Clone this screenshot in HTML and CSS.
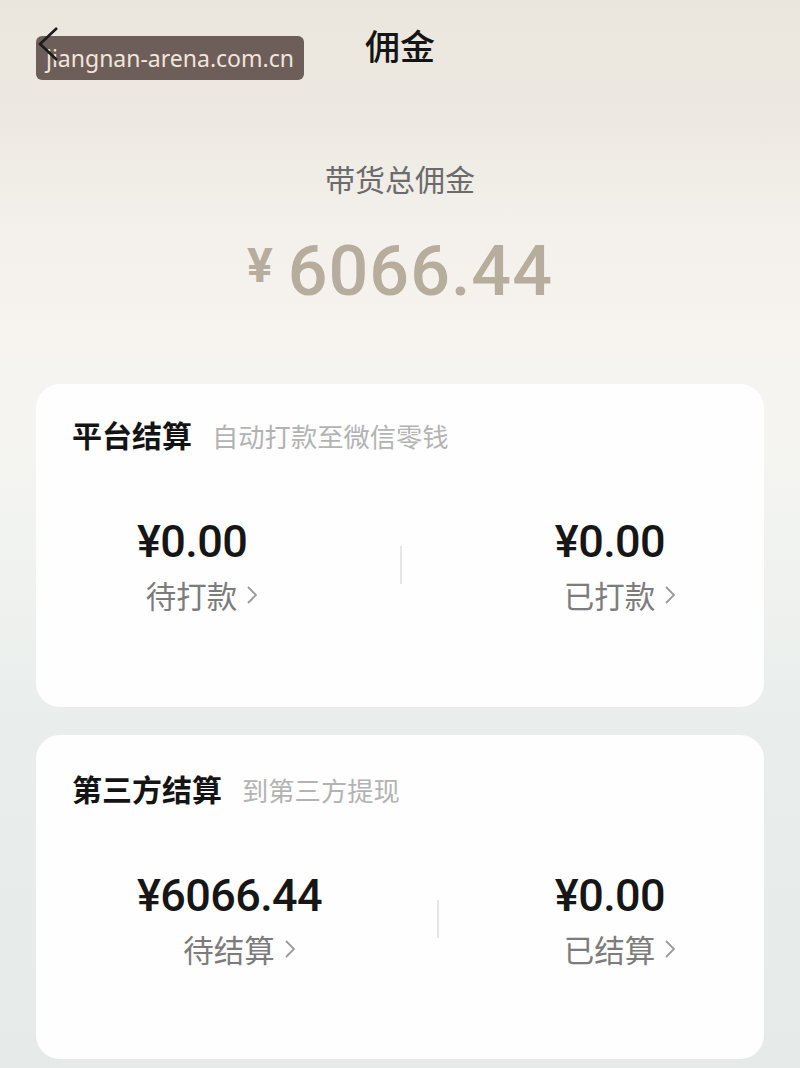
FILE: index.html
```html
<!DOCTYPE html>
<html lang="zh-CN">
<head>
    <meta charset="UTF-8">
    <meta name="viewport" content="width=device-width, initial-scale=1.0">
    <title>佣金</title>
    <link rel="stylesheet" href="styles.css">
</head>
<body>
    <div class="page">
        <div class="header">
            <div class="watermark">jiangnan-arena.com.cn</div>
            <svg class="back" width="24" height="40" viewBox="0 0 24 40">
                <polyline points="20,2 3,18 20,34" fill="none" stroke="#1b1b1b" stroke-width="2.6"/>
            </svg>
            <h1>佣金</h1>
        </div>

        <div class="summary">
            <p class="summary-label">带货总佣金</p>
            <p class="summary-amount"><span class="yen">¥</span>6066.44</p>
        </div>

        <div class="card">
            <div class="card-title">平台结算<span class="card-sub">自动打款至微信零钱</span></div>
            <div class="stats">
                <div class="stat">
                    <div class="stat-value">¥0.00</div>
                    <div class="stat-label">待打款<svg class="arrow" width="12" height="22" viewBox="0 0 12 22"><polyline points="2,3 10,11 2,19" fill="none" stroke="#9a9a9a" stroke-width="1.8"/></svg></div>
                </div>
                <div class="divider"></div>
                <div class="stat">
                    <div class="stat-value">¥0.00</div>
                    <div class="stat-label">已打款<svg class="arrow" width="12" height="22" viewBox="0 0 12 22"><polyline points="2,3 10,11 2,19" fill="none" stroke="#9a9a9a" stroke-width="1.8"/></svg></div>
                </div>
            </div>
        </div>

        <div class="card">
            <div class="card-title">第三方结算<span class="card-sub">到第三方提现</span></div>
            <div class="stats">
                <div class="stat">
                    <div class="stat-value">¥6066.44</div>
                    <div class="stat-label">待结算<svg class="arrow" width="12" height="22" viewBox="0 0 12 22"><polyline points="2,3 10,11 2,19" fill="none" stroke="#9a9a9a" stroke-width="1.8"/></svg></div>
                </div>
                <div class="divider"></div>
                <div class="stat">
                    <div class="stat-value">¥0.00</div>
                    <div class="stat-label">已结算<svg class="arrow" width="12" height="22" viewBox="0 0 12 22"><polyline points="2,3 10,11 2,19" fill="none" stroke="#9a9a9a" stroke-width="1.8"/></svg></div>
                </div>
            </div>
        </div>
    </div>
</body>
</html>
```

FILE: styles.css
```css
/* General Styles */
body {
    margin: 0;
    font-family: "Noto Sans CJK SC", "Noto Sans", sans-serif;
    color: #111;
    background: linear-gradient(180deg, #ebe6dd 0px, #ede9e2 120px, #f3efea 220px, #f7f4f0 340px, #f3f4f1 500px, #e9eeec 720px, #e6ebea 1068px);
    min-height: 1068px;
}

.page {
    padding: 0 36px 8px;
}

/* Header */
.header {
    position: relative;
    height: 90px;
    display: flex;
    align-items: center;
    justify-content: center;
}

.header h1 {
    margin: 0;
    font-size: 35px;
    font-weight: 500;
    line-height: 40px;
    color: #151515;
}

.back {
    position: absolute;
    left: 1px;
    top: 26px;
}

.watermark {
    position: absolute;
    left: 0;
    top: 36px;
    width: 268px;
    height: 44px;
    box-sizing: border-box;
    padding-left: 10px;
    border-radius: 6px;
    background: rgba(104, 88, 83, 0.96);
    color: #f1e5dc;
    font-family: "Noto Sans", sans-serif;
    font-size: 23px;
    line-height: 44px;
}

/* Summary */
.summary {
    padding-top: 68px;
    text-align: center;
}

.summary-label {
    margin: 0;
    font-size: 30px;
    line-height: 40px;
    color: #6b6b6b;
}

.summary-amount {
    margin: 28px 0 0;
    font-family: Roboto, sans-serif;
    font-size: 70px;
    font-weight: 500;
    line-height: 80px;
    color: #b6ad9d;
    letter-spacing: 1px;
}

.yen {
    font-size: 48px;
    font-weight: 700;
    vertical-align: 13px;
    margin-right: 14px;
}

/* Cards */
.card {
    margin-top: 73px;
    padding: 30px 0 92px;
    background: #fefefe;
    border-radius: 24px;
}

.card + .card {
    margin-top: 28px;
    padding: 33px 0 90px;
}

.card-title {
    padding-left: 36px;
    font-size: 30px;
    font-weight: 700;
    line-height: 40px;
    color: #141414;
}

.card-sub {
    margin-left: 20px;
    font-size: 26.3px;
    font-weight: 400;
    color: #b3b3b3;
}

.stats {
    display: flex;
    justify-content: space-between;
    align-items: center;
    margin-top: 58px;
    padding: 0 99px 0 101px;
}

.stat {
    display: flex;
    flex-direction: column;
    align-items: center;
}

.stat-value {
    font-family: Roboto, sans-serif;
    font-size: 45px;
    font-weight: 500;
    line-height: 56px;
    letter-spacing: -0.6px;
    color: #161616;
}

.stat-label {
    margin: 5px -30px 0 -10px;
    font-size: 30.5px;
    line-height: 40px;
    color: #7c7c7c;
    display: flex;
    align-items: center;
    white-space: nowrap;
}

.arrow {
    margin-left: 9px;
}

.divider {
    width: 2px;
    height: 38px;
    background: #e6e6e6;
}
```
